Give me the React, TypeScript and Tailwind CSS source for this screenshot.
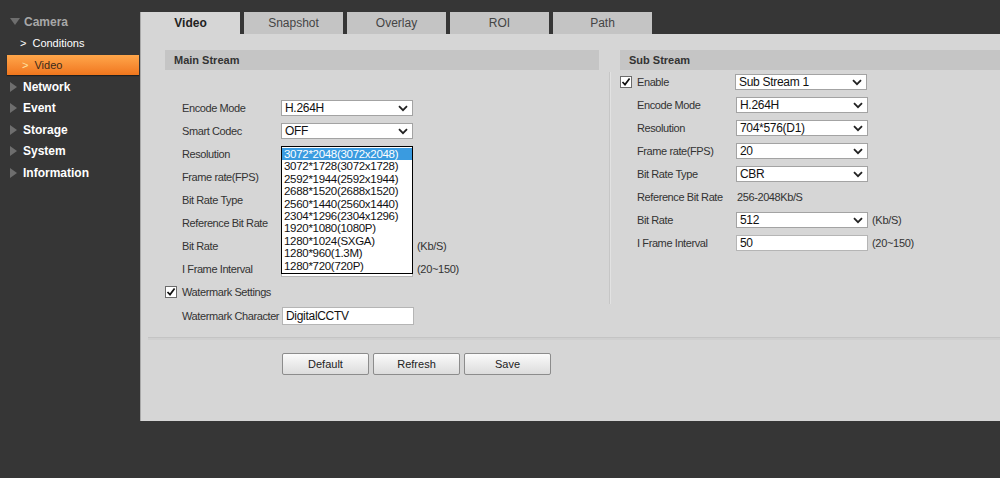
import React from "react";

const font = { fontFamily: '"Liberation Sans", Arial, sans-serif' };

const Chevron = () => (
    <svg width="10" height="7" viewBox="0 0 10 7" className="shrink-0">
        <path d="M1 1.2 L5 5.2 L9 1.2" fill="none" stroke="#222" strokeWidth="1.8" />
    </svg>
);

const Check = () => (
    <div className="w-[12px] h-[12px] bg-white border border-[#6b6b6b] flex items-center justify-center shrink-0">
        <svg width="10" height="10" viewBox="0 0 10 10">
            <path d="M1.5 5 L4 7.6 L8.6 1.6" fill="none" stroke="#111" strokeWidth="1.7" />
        </svg>
    </div>
);

const Select = ({ value }: { value: string }) => (
    <div className="w-[132px] h-[16px] bg-white border border-[#a3a3a3] flex items-center justify-between pl-[3px] pr-[4px] text-[12px] tracking-[-0.3px] text-[#111] leading-none overflow-hidden">
        <span className="whitespace-nowrap">{value}</span>
        <Chevron />
    </div>
);

const Input = ({ value, tall }: { value: string; tall?: boolean }) => (
    <div
        className={
            "w-[132px] bg-white border border-[#b5b5b5] flex items-center pl-[3px] text-[12px] tracking-[-0.3px] text-[#111] leading-none " +
            (tall ? "h-[18px]" : "h-[16px]")
        }
    >
        {value}
    </div>
);

const Row = ({ label, children, extra }: { label: string; children?: React.ReactNode; extra?: string }) => (
    <div className="flex items-center h-[16px] pl-[17px]">
        <div className="w-[99px] shrink-0 text-[11px] tracking-[-0.4px] whitespace-nowrap text-[#333]">{label}</div>
        {children}
        {extra && <div className="ml-[4px] text-[11px] tracking-[-0.3px] text-[#333]">{extra}</div>}
    </div>
);

const resolutions = [
    "3072*2048(3072x2048)",
    "3072*1728(3072x1728)",
    "2592*1944(2592x1944)",
    "2688*1520(2688x1520)",
    "2560*1440(2560x1440)",
    "2304*1296(2304x1296)",
    "1920*1080(1080P)",
    "1280*1024(SXGA)",
    "1280*960(1.3M)",
    "1280*720(720P)",
];

const Tri = () => (
    <svg width="8" height="10" viewBox="0 0 8 10" className="shrink-0">
        <path d="M0 0 L7 5 L0 10 Z" fill="#6e6e6e" />
    </svg>
);

const Sidebar = () => (
    <div className="w-[140px] shrink-0 pt-[11px] flex flex-col">
        <div className="h-[21.6px] flex items-center pl-[10px] gap-[4px]">
            <svg width="10" height="7" viewBox="0 0 10 7">
                <path d="M0 0 L10 0 L5 7 Z" fill="#6e6e6e" />
            </svg>
            <span className="text-[12px] font-bold text-[#a8a8a8]">Camera</span>
        </div>
        <div className="h-[21.6px] flex items-center pl-[20px] gap-[6px]">
            <span className="text-[11px] text-white">&gt;</span>
            <span className="text-[11px] text-white">Conditions</span>
        </div>
        <div className="h-[21.6px] flex items-center pl-[7px]">
            <div className="w-[132px] h-[20px] bg-gradient-to-b from-[#ffa64a] to-[#f0761c] flex items-center pl-[15px] gap-[6px] shadow-[0_1px_1px_rgba(0,0,0,0.4)]">
                <span className="text-[11px] text-[#ffe2a0]">&gt;</span>
                <span className="text-[11px] text-[#3a2a1a]">Video</span>
            </div>
        </div>
        {["Network", "Event", "Storage", "System", "Information"].map((n) => (
            <div key={n} className="h-[21.6px] flex items-center pl-[10px] gap-[5px]">
                <Tri />
                <span className="text-[12px] font-bold text-white">{n}</span>
            </div>
        ))}
    </div>
);

const tabs = ["Video", "Snapshot", "Overlay", "ROI", "Path"];

// fields hidden behind the open resolution list
const Hidden = () => <div className="w-[132px] h-[16px]" />;

export default function App() {
    return (
        <div className="w-[1000px] h-[478px] bg-[#363636] flex overflow-hidden" style={font}>
            <Sidebar />
            <div className="flex-1 pt-[12px]">
                <div className="h-[409px] border-l border-[#a9a9a9] flex flex-col">
                    <div className="flex gap-[4px] h-[22px]">
                        {tabs.map((t, i) => (
                            <div
                                key={t}
                                className={
                                    "w-[99px] h-[22px] flex items-center justify-center text-[12px] " +
                                    (i === 0 ? "bg-[#d6d6d6] font-bold text-[#222]" : "bg-[#c4c4c4] text-[#444]")
                                }
                            >
                                {t}
                            </div>
                        ))}
                    </div>
                    <div className="flex-1 bg-[#d6d6d6] pt-[16px]">
                        <div className="flex pl-[24px]">
                            {/* Main stream */}
                            <div className="w-[434px] shrink-0 flex flex-col">
                                <div className="h-[20px] bg-[#c5c5c5] flex items-center pl-[9px] text-[11px] font-bold text-[#333]">
                                    Main Stream
                                </div>
                                <div className="mt-[30px] flex flex-col gap-[7px] relative">
                                    <Row label="Encode Mode"><Select value="H.264H" /></Row>
                                    <Row label="Smart Codec"><Select value="OFF" /></Row>
                                    <Row label="Resolution"><Hidden /></Row>
                                    <Row label="Frame rate(FPS)"><Hidden /></Row>
                                    <Row label="Bit Rate Type"><Hidden /></Row>
                                    <Row label="Reference Bit Rate" />
                                    <Row label="Bit Rate" extra="(Kb/S)"><Hidden /></Row>
                                    <Row label="I Frame Interval" extra="(20~150)"><Input value="" /></Row>
                                    <div className="flex items-center h-[16px] gap-[5px]">
                                        <Check />
                                        <span className="text-[11px] tracking-[-0.4px] text-[#333]">Watermark Settings</span>
                                    </div>
                                    <div className="flex items-center h-[18px] pl-[17px]">
                                        <div className="w-[100px] shrink-0 text-[11px] tracking-[-0.4px] whitespace-nowrap text-[#333]">
                                            Watermark Character
                                        </div>
                                        <Input value="DigitalCCTV" tall />
                                    </div>
                                    {/* open resolution list */}
                                    <div className="absolute left-[116px] top-[46px] w-[132px] bg-white border border-black py-[1px] text-[11.5px] tracking-[-0.3px] leading-[12.4px] text-[#111]">
                                        {resolutions.map((r, i) => (
                                            <div
                                                key={r}
                                                className={"pl-[2px] " + (i === 0 ? "bg-[#3a9be0] text-white" : "")}
                                            >
                                                {r}
                                            </div>
                                        ))}
                                    </div>
                                </div>
                            </div>
                            <div className="w-[21px] shrink-0 flex justify-center">
                                <div className="mt-[22px] h-[232px] w-[2px] border-l border-[#c6c6c6] border-r border-r-[#e2e2e2]" />
                            </div>
                            {/* Sub stream */}
                            <div className="flex-1 flex flex-col">
                                <div className="h-[20px] bg-[#c5c5c5] flex items-center pl-[9px] text-[11px] font-bold text-[#333]">
                                    Sub Stream
                                </div>
                                <div className="mt-[4px] flex flex-col gap-[7px]">
                                    <div className="flex items-center h-[16px]">
                                        <Check />
                                        <div className="w-[103px] pl-[5px] text-[11px] tracking-[-0.4px] text-[#333]">Enable</div>
                                        <Select value="Sub Stream 1" />
                                    </div>
                                    <Row label="Encode Mode"><Select value="H.264H" /></Row>
                                    <Row label="Resolution"><Select value="704*576(D1)" /></Row>
                                    <Row label="Frame rate(FPS)"><Select value="20" /></Row>
                                    <Row label="Bit Rate Type"><Select value="CBR" /></Row>
                                    <Row label="Reference Bit Rate">
                                        <span className="text-[11px] tracking-[-0.4px] text-[#333] pl-[1px]">256-2048Kb/S</span>
                                    </Row>
                                    <Row label="Bit Rate" extra="(Kb/S)"><Select value="512" /></Row>
                                    <Row label="I Frame Interval" extra="(20~150)"><Input value="50" /></Row>
                                </div>
                            </div>
                        </div>
                        <div className="ml-[7px] mt-[12px] h-[3px] border-t border-[#c4c4c4] bg-[#cfcfcf]" />
                        <div className="mt-[13px] pl-[141px] flex gap-[4px]">
                            {["Default", "Refresh", "Save"].map((b) => (
                                <div
                                    key={b}
                                    className="w-[87px] h-[22px] rounded-[2px] border border-[#8c8c8c] bg-gradient-to-b from-[#fbfbfb] to-[#dcdcdc] flex items-center justify-center text-[11px] text-[#222]"
                                >
                                    {b}
                                </div>
                            ))}
                        </div>
                    </div>
                </div>
            </div>
        </div>
    );
}
